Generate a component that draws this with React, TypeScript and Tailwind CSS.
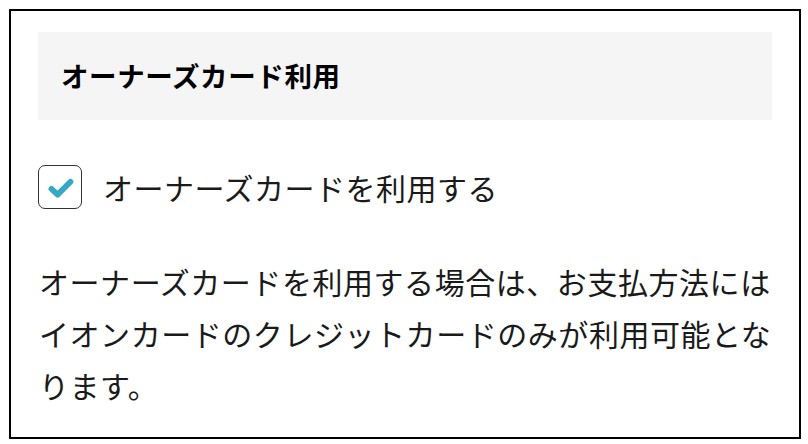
export default function App() {
  return (
    <div className="w-[808px] h-[444px] bg-white pt-[9px] pl-[9px] font-['Noto_Sans_CJK_JP',sans-serif]">
      <div className="w-[792px] h-[430px] border-2 border-black px-[27px] pt-[21px]">
        <div className="h-[88px] bg-[#f5f5f5] px-[23px] flex items-center">
          <h2 className="text-[27.5px] font-bold tracking-[0.6px] text-black leading-none">オーナーズカード利用</h2>
        </div>

        <label className="mt-[45px] flex items-center gap-[21px]">
          <span className="w-[44px] h-[44px] rounded-[7px] border-[1.5px] border-[#333] flex items-center justify-center">
            <svg width="44" height="44" viewBox="0 0 44 44">
              <path d="M13 24 L19.5 30 L33 16.5" fill="none" stroke="#35a9c4" strokeWidth="6" strokeLinecap="round" strokeLinejoin="round" />
            </svg>
          </span>
          <span className="text-[30px] leading-none tracking-[0.5px] text-[#1a1a1a]">オーナーズカードを利用する</span>
        </label>

        <p className="mt-[46px] pl-[1px] text-[30px] leading-[52px] tracking-[0.55px] text-[#1a1a1a]">
          オーナーズカードを利用する場合は、お支払方法にはイオンカードのクレジットカードのみが利用可能となります。
        </p>
      </div>
    </div>
  );
}
